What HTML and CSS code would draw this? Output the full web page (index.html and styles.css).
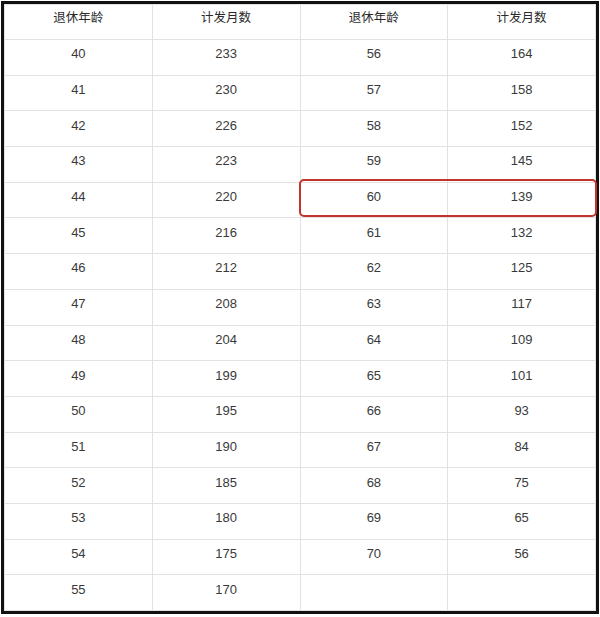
FILE: index.html
```html
<!DOCTYPE html>
<html lang="zh">
<head>
<meta charset="utf-8">
<link rel="stylesheet" href="styles.css">
</head>
<body>
<div class="frame">
  <table class="pension">
    <thead>
      <tr><th>退休年龄</th><th>计发月数</th><th>退休年龄</th><th>计发月数</th></tr>
    </thead>
    <tbody>
      <tr><td>40</td><td>233</td><td>56</td><td>164</td></tr>
      <tr><td>41</td><td>230</td><td>57</td><td>158</td></tr>
      <tr><td>42</td><td>226</td><td>58</td><td>152</td></tr>
      <tr><td>43</td><td>223</td><td>59</td><td>145</td></tr>
      <tr><td>44</td><td>220</td><td>60</td><td>139</td></tr>
      <tr><td>45</td><td>216</td><td>61</td><td>132</td></tr>
      <tr><td>46</td><td>212</td><td>62</td><td>125</td></tr>
      <tr><td>47</td><td>208</td><td>63</td><td>117</td></tr>
      <tr><td>48</td><td>204</td><td>64</td><td>109</td></tr>
      <tr><td>49</td><td>199</td><td>65</td><td>101</td></tr>
      <tr><td>50</td><td>195</td><td>66</td><td>93</td></tr>
      <tr><td>51</td><td>190</td><td>67</td><td>84</td></tr>
      <tr><td>52</td><td>185</td><td>68</td><td>75</td></tr>
      <tr><td>53</td><td>180</td><td>69</td><td>65</td></tr>
      <tr><td>54</td><td>175</td><td>70</td><td>56</td></tr>
      <tr><td>55</td><td>170</td><td></td><td></td></tr>
    </tbody>
  </table>
  <div class="highlight"></div>
</div>
</body>
</html>
```

FILE: styles.css
```css
html, body {
  margin: 0;
  padding: 0;
  background: #ffffff;
}

body {
  font-family: "Liberation Sans", "Noto Sans CJK SC", sans-serif;
  color: #333333;
}

.frame {
  position: relative;
  margin: 1px 0 0 1px;
  width: 592px;
  height: 607px;
  border: 3px solid #111111;
}

.pension {
  width: 592px;
  height: 607px;
  border-collapse: collapse;
  table-layout: fixed;
}

.pension th,
.pension td {
  border: 1px solid #e2e2e2;
  text-align: center;
  vertical-align: middle;
  font-size: 13px;
  padding: 0;
}

.pension th {
  font-family: "Noto Sans CJK SC", sans-serif;
  font-weight: normal;
  font-size: 12.5px;
  color: #2a2a2a;
  height: 23px;
  padding-bottom: 11px;
}

.pension td {
  color: #3a3a3a;
  padding-bottom: 7px;
}

.highlight {
  position: absolute;
  left: 295px;
  top: 175px;
  width: 298px;
  height: 38px;
  box-sizing: border-box;
  border: 2.5px solid #c0342c;
  border-radius: 5px;
}
```
